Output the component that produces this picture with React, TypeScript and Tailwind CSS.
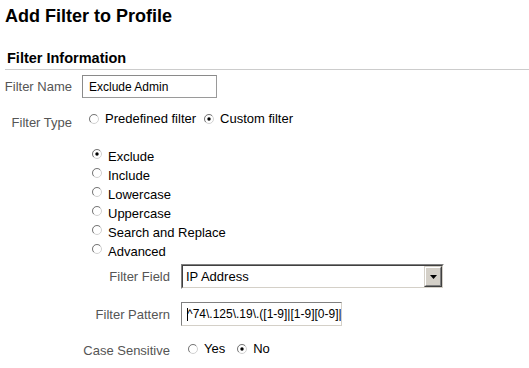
import React from "react";

const Radio: React.FC<{ checked?: boolean; className?: string }> = ({ checked, className }) => {
  return (
    <svg width="10" height="10" viewBox="0 0 10 10" className={"shrink-0 " + (className ?? "")}>
      <circle cx="5" cy="5" r="4.5" fill="#ffffff" stroke="#d0d0d0" strokeWidth="1" />
      <path d="M1.8 8.2 A4.5 4.5 0 0 1 8.2 1.8" fill="none" stroke="#7a7a7a" strokeWidth="1" />
      {checked && <circle cx="5" cy="5" r="1.7" fill="#000000" />}
    </svg>
  );
};

const filterOptions = [
  { label: "Exclude", checked: true },
  { label: "Include", checked: false },
  { label: "Lowercase", checked: false },
  { label: "Uppercase", checked: false },
  { label: "Search and Replace", checked: false },
  { label: "Advanced", checked: false },
];

const App: React.FC = () => {
  return (
    <div className="w-[529px] h-[368px] overflow-hidden bg-white text-[13px] text-black font-['Liberation_Sans',Arial,sans-serif]">
      <h1 className="pl-[5px] pt-[7px] text-[18px] leading-[18px] font-bold">Add Filter to Profile</h1>
      <h2 className="mt-[25px] pl-[7px] text-[14.5px] leading-[16px] font-bold">Filter Information</h2>
      <div className="mt-[3px] ml-[5px] h-px bg-[#cccccc]" />

      {/* Filter Name */}
      <div className="mt-[5px] flex items-center">
        <div className="w-[72px] text-right leading-[15px] text-[#555555]">Filter Name</div>
        <div className="ml-[10px] flex h-[23px] w-[135px] items-center border border-[#9a9a9a] border-t-[#8a8a8a] border-l-[#8a8a8a] px-[6px] text-[12px]">
          Exclude Admin
        </div>
      </div>

      {/* Filter Type */}
      <div className="mt-[13px] flex items-start">
        <div className="mt-[4px] w-[72px] text-right leading-[15px] text-[#555555]">Filter Type</div>
        <div className="ml-[17px] flex h-[15px] items-center leading-[15px]">
          <Radio />
          <span className="ml-[6px]">Predefined filter</span>
          <Radio checked className="ml-[8px]" />
          <span className="ml-[6px]">Custom filter</span>
        </div>
      </div>

      {/* Filter kind list */}
      <div className="mt-[17px] ml-[92px] flex flex-col">
        {filterOptions.map((o) => (
          <div key={o.label} className="flex h-[19px] items-start leading-[19px]">
            <Radio checked={o.checked} className="mt-[2px]" />
            <span className="ml-[6px]">{o.label}</span>
          </div>
        ))}
      </div>

      {/* Filter Field */}
      <div className="mt-[3px] flex items-center">
        <div className="w-[170px] text-right leading-[15px] text-[#555555]">Filter Field</div>
        <div className="ml-[11px] h-[25px] w-[263px] border border-[#808080] border-r-white border-b-white">
          <div className="flex h-full w-full items-center border border-[#404040] border-r-[#d4d0c8] border-b-[#d4d0c8]">
            <span className="flex-1 pl-[3px] leading-[15px]">IP Address</span>
            <div className="h-full w-[18px] border border-[#d4d0c8] border-r-[#404040] border-b-[#404040]">
              <div className="flex h-full w-full items-center justify-center border border-white border-r-[#808080] border-b-[#808080] bg-[#d4d0c8]">
                <svg width="7" height="4" viewBox="0 0 7 4">
                  <path d="M0 0 H7 L3.5 4 Z" fill="#000000" />
                </svg>
              </div>
            </div>
          </div>
        </div>
      </div>

      {/* Filter Pattern */}
      <div className="mt-[13px] flex items-center">
        <div className="w-[170px] text-right leading-[15px] text-[#555555]">Filter Pattern</div>
        <div className="relative ml-[11px] flex h-[24px] w-[161px] items-center overflow-hidden whitespace-nowrap border border-[#808080] border-r-[#d4d0c8] border-b-[#d4d0c8] pl-[5px] text-[12px]">
          {"^74\\.125\\.19\\.([1-9]|[1-9][0-9]|"}
          <span className="absolute left-[5px] top-[5px] h-[13px] w-px bg-black" />
        </div>
      </div>

      {/* Case Sensitive */}
      <div className="mt-[15px] flex items-start">
        <div className="mt-[2px] w-[170px] text-right leading-[15px] text-[#555555]">Case Sensitive</div>
        <div className="ml-[18px] flex h-[15px] items-center leading-[15px]">
          <Radio />
          <span className="ml-[6px]">Yes</span>
          <Radio checked className="ml-[12px]" />
          <span className="ml-[6px]">No</span>
        </div>
      </div>
    </div>
  );
};

export default App;
